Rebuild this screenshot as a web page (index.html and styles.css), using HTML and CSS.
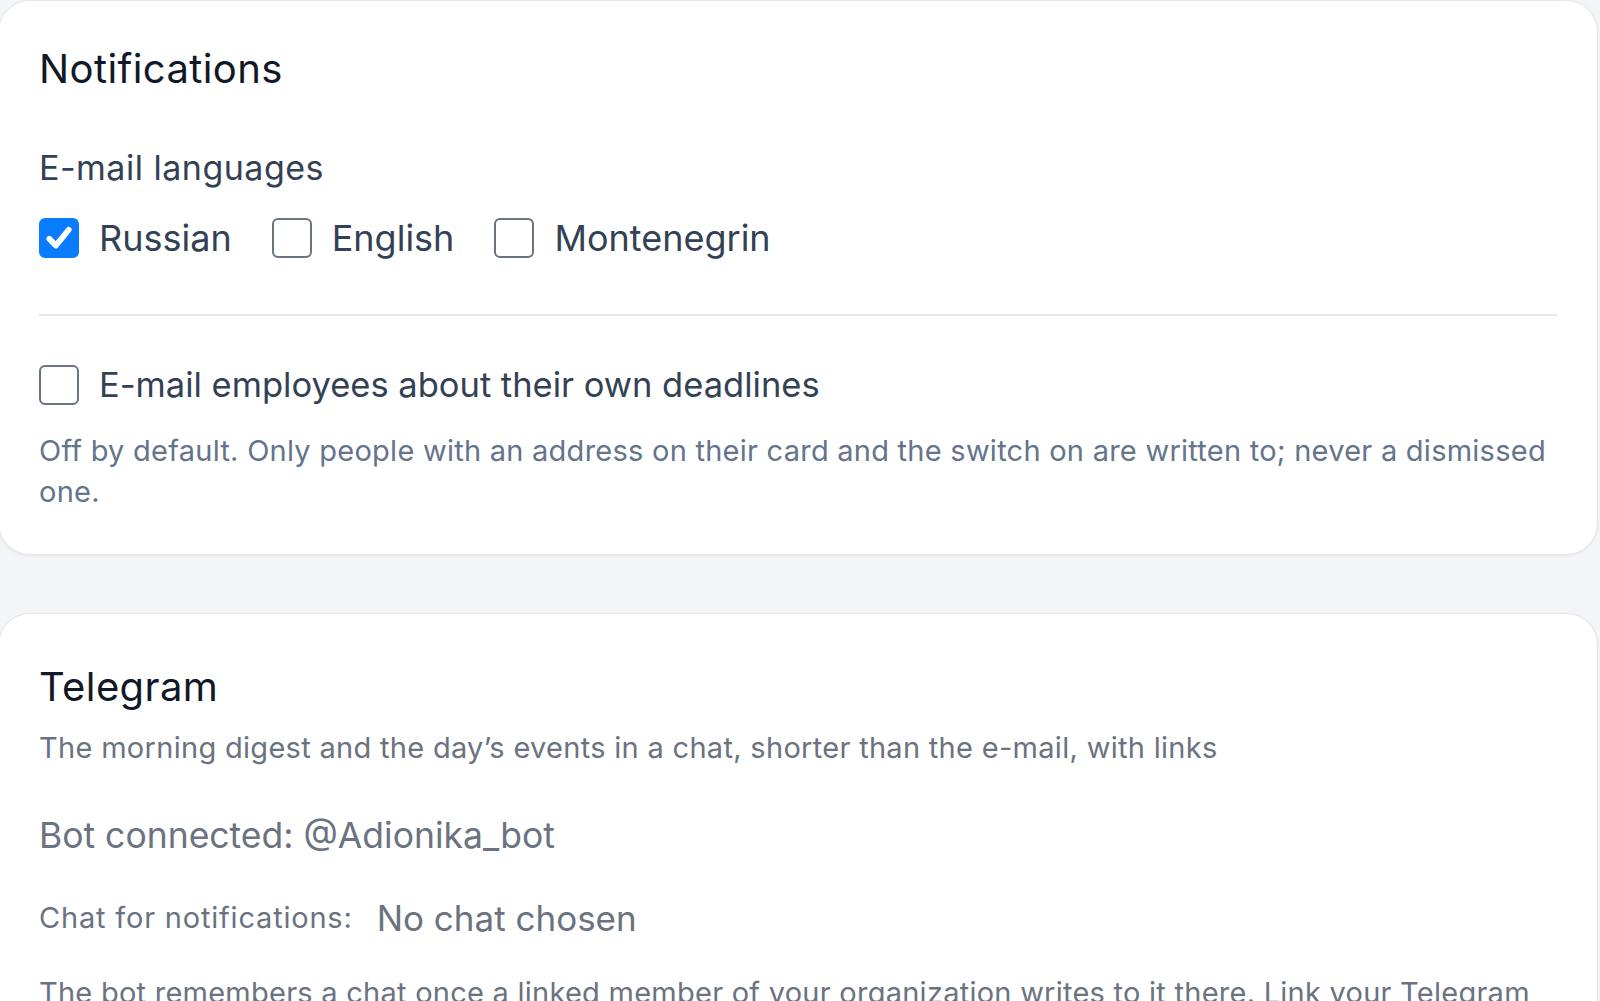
FILE: index.html
```html
<!DOCTYPE html>
<html lang="en">
<head>
    <meta charset="UTF-8">
    <meta name="viewport" content="width=device-width, initial-scale=1.0">
    <title>Settings - Notifications</title>
    <link rel="stylesheet" href="styles.css">
</head>
<body>
    <div class="page">
        <section class="card">
            <h2 class="card-title">Notifications</h2>
            <h3 class="group-title">E-mail languages</h3>
            <div class="check-row">
                <label class="check">
                    <span class="box checked">
                        <svg viewBox="0 0 20 20"><path d="M4.6 10.4 L8.2 14.2 L15.4 5.4"/></svg>
                    </span>
                    Russian
                </label>
                <label class="check">
                    <span class="box"></span>
                    English
                </label>
                <label class="check">
                    <span class="box"></span>
                    Montenegrin
                </label>
            </div>

            <hr class="divider">

            <label class="check check-option">
                <span class="box"></span>
                E-mail employees about their own deadlines
            </label>
            <p class="hint">Off by default. Only people with an address on their card and the switch on are written to; never a dismissed one.</p>
        </section>

        <section class="card">
            <h2 class="card-title card-title-tg">Telegram</h2>
            <p class="lead">The morning digest and the day’s events in a chat, shorter than the e-mail, with links</p>
            <p class="bot">Bot connected: @Adionika_bot</p>
            <div class="chat-row">
                <span class="chat-label">Chat for notifications:</span>
                <span class="chat-value">No chat chosen</span>
            </div>
            <p class="note">The bot remembers a chat once a linked member of your organization writes to it there. Link your Telegram account in your profile to pick a chat here.</p>
        </section>
    </div>
</body>
</html>
```

FILE: styles.css
```css
* {
    margin: 0;
    padding: 0;
    box-sizing: border-box;
}

body {
    background: #f4f5f7;
    font-family: 'Inter', 'Noto Sans', sans-serif;
    color: #334155;
    overflow: hidden;
}

.page {
    display: flex;
    flex-direction: column;
    gap: 58px;
}

.card {
    width: 1600px;
    margin-left: -2px;
    background: #fff;
    border: 1px solid #e5e7eb;
    border-radius: 32px;
    padding: 40px 40px 42px;
    box-shadow: 0 1px 3px rgba(15, 23, 42, 0.06);
}

.card-title {
    font-size: 40px;
    line-height: 56px;
    font-weight: 400;
    letter-spacing: 0.4px;
    color: #111827;
}

.card-title-tg {
    line-height: 66px;
}

.group-title {
    margin-top: 47px;
    font-size: 34px;
    line-height: 48px;
    font-weight: 400;
    letter-spacing: 0.5px;
    color: #334155;
}

.check-row {
    display: flex;
    gap: 40px;
    margin-top: 22px;
}

.check {
    display: flex;
    align-items: center;
    gap: 20px;
    font-size: 36px;
    line-height: 48px;
    color: #334155;
    cursor: pointer;
}

.box {
    width: 40px;
    height: 40px;
    flex-shrink: 0;
    border: 2px solid #6b7280;
    border-radius: 6px;
    background: #fff;
    display: flex;
    align-items: center;
    justify-content: center;
}

.box.checked {
    background: #0a7cff;
    border-color: #0a7cff;
}

.box svg {
    width: 36px;
    height: 36px;
    fill: none;
    stroke: #fff;
    stroke-width: 3.2;
    stroke-linecap: round;
    stroke-linejoin: round;
}

.divider {
    border: none;
    height: 2px;
    background: #e5e7eb;
    margin-top: 52px;
}

.check-option {
    margin-top: 45px;
    font-size: 34.5px;
}

.hint {
    margin-top: 22px;
    font-size: 29px;
    line-height: 40.6px;
    letter-spacing: 0.25px;
    color: #64748b;
}

.lead {
    margin-top: 8px;
    font-size: 29px;
    line-height: 40px;
    letter-spacing: 0.3px;
    color: #6b7280;
}

.bot {
    margin-top: 43px;
    font-size: 35.5px;
    line-height: 50px;
    color: #6b7280;
}

.chat-row {
    display: flex;
    align-items: center;
    gap: 24px;
    margin-top: 33px;
    color: #6b7280;
}

.chat-label {
    font-size: 29px;
    line-height: 40px;
    letter-spacing: 0.8px;
}

.chat-value {
    font-size: 35px;
    line-height: 48px;
}

.note {
    margin-top: 31px;
    font-size: 29px;
    line-height: 40.6px;
    letter-spacing: 0.25px;
    color: #6b7280;
}
```
